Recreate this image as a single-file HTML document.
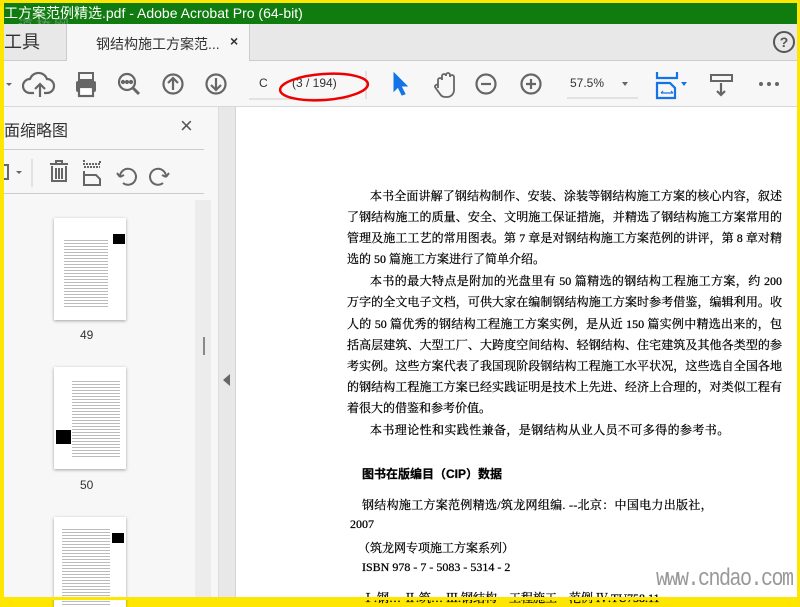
<!DOCTYPE html>
<html><head><meta charset="utf-8"><style>
*{margin:0;padding:0;box-sizing:border-box}
body{width:800px;height:600px;overflow:hidden;background:#ffe600;position:relative;font-family:"Liberation Sans","Noto Sans CJK SC",sans-serif}
.a{position:absolute}
#title{left:4px;top:3px;width:793px;height:21px;background:#107c10;color:#fff;font-size:14px;line-height:20px}
#tabs{left:4px;top:24px;width:793px;height:37px;background:#e8e8e8;border-bottom:1px solid #ccc}
#tool{left:4px;top:61px;width:793px;height:46px;background:#f7f7f7;border-bottom:1px solid #d8d8d8}
#side{left:4px;top:107px;width:214px;height:490px;background:#f7f7f7}
#split{left:218px;top:107px;width:18px;height:490px;background:#e8e8e8;border-left:1px solid #ddd;border-right:1px solid #d4d4d4}
#doc{left:236px;top:107px;width:561px;height:490px;background:#fff}
.t{position:absolute;font-family:"Liberation Serif","Noto Serif CJK SC",serif;font-size:12px;color:#000;white-space:nowrap;-webkit-text-stroke:0.25px #000}
.f{white-space:normal;text-align:justify;text-align-last:justify}
svg{position:absolute}
.thumb{position:absolute;left:50px;width:72px;background:#fff;box-shadow:0 1px 3px rgba(0,0,0,.35)}
</style></head><body>
<div id="title" class="a">工方案范例精选.pdf - Adobe Acrobat Pro (64-bit)</div>
<div class="a" style="left:18px;top:14px;color:#9aa;font-size:15px;letter-spacing:3px;opacity:.6">道桥网</div>
<div id="tabs" class="a">
 <div class="a" style="left:0;top:0;width:62px;height:37px;font-size:18px;line-height:37px;color:#333">工具</div>
 <div class="a" style="left:62px;top:0;width:184px;height:38px;background:#f7f7f7;border-left:1px solid #ccc;border-right:1px solid #ccc"></div>
 <div class="a" style="left:92px;top:10px;font-size:14px;color:#333">钢结构施工方案范...</div>
 <div class="a" style="left:226px;top:9px;font-size:14px;color:#333;font-weight:bold">×</div>
 <svg style="left:768px;top:6px" width="24" height="24"><circle cx="12" cy="12" r="10" fill="none" stroke="#555" stroke-width="2"/><text x="12" y="17" text-anchor="middle" font-size="14" font-weight="bold" fill="#555" font-family="Liberation Sans">?</text></svg>
</div>
<div id="tool" class="a">
 <svg style="left:0;top:0" width="793" height="46" fill="none" stroke="#666" stroke-width="2.2">
  <path d="M2 22l3 3 3-3" fill="#666" stroke="none"/>
  <path d="M30 32h-4a7 7 0 0 1 0-14a9 9 0 0 1 17 0a7 7 0 0 1 0 14h-3M36 36v-12M31 28l5-5 5 5"/>
  <rect x="72" y="20" width="20" height="11" rx="2" fill="#666" stroke="none"/><rect x="75" y="12" width="14" height="7" stroke-width="2"/><rect x="75" y="26" width="14" height="9" fill="#fff" stroke="#666"/>
  <circle cx="123" cy="21" r="8"/><path d="M129 27l6 6" stroke-width="3"/><circle cx="119" cy="21" r="1" fill="#666"/><circle cx="123" cy="21" r="1" fill="#666"/><circle cx="127" cy="21" r="1" fill="#666"/>
  <circle cx="169" cy="23" r="9.5"/><path d="M169 29v-12M164 22l5-5 5 5"/>
  <circle cx="212" cy="23" r="9.5"/><path d="M212 17v12M207 24l5 5 5-5"/>
  <path d="M245 38h100" stroke="#ccc" stroke-width="1"/>
  <path d="M362 10v28" stroke="#ccc" stroke-width="1"/>
  <path d="M390 12v18l4-4 4 8 3-1-4-8h6z" fill="#1473e6" stroke="#1473e6" stroke-width="1"/>
  <path d="M434 27v-8a2 2 0 0 1 4 0v-4a2 2 0 0 1 4 0v-1a2 2 0 0 1 4 0v2a2 2 0 0 1 4 0v13a7 7 0 0 1-7 7h-2a6 6 0 0 1-5-3l-5-7a2 2 0 0 1 3-2z" stroke-width="1.8"/>
  <circle cx="482" cy="23" r="9.5"/><path d="M477 23h10"/>
  <circle cx="527" cy="23" r="9.5"/><path d="M522 23h10M527 18v10"/>
  <path d="M563 37h71" stroke="#ccc" stroke-width="1"/>
  <path d="M618 21h6l-3 4z" fill="#666" stroke="none"/>
  <path d="M653 11v6h20v-6M653 32v-10h13l5 5v10h-18z" stroke="#1473e6"/><path d="M657 32h12M657 32l2-2M669 32l-2-2" stroke="#1473e6" stroke-width="1.2"/><path d="M677 21h6l-3 4z" fill="#1473e6" stroke="none"/>
  <rect x="707" y="14" width="21" height="6" stroke-width="2"/><path d="M717 22v12M713 30l4 4 4-4"/>
  <circle cx="757" cy="23" r="2" fill="#666" stroke="none"/><circle cx="765" cy="23" r="2" fill="#666" stroke="none"/><circle cx="773" cy="23" r="2" fill="#666" stroke="none"/>
 </svg>
 <div class="a" style="left:255px;top:15px;font-size:12px;color:#333">C</div>
 <div class="a" style="left:288px;top:15px;font-size:12px;color:#333">(3 / 194)</div>
 <div class="a" style="left:566px;top:15px;font-size:12px;color:#333">57.5%</div>
 <svg style="left:270px;top:6px" width="100" height="40"><ellipse cx="50" cy="20" rx="44" ry="13" fill="none" stroke="#e00" stroke-width="2.5" transform="rotate(-4 50 20)"/></svg>
</div>
<div id="side" class="a">
 <div class="a" style="left:0;top:10px;font-size:16px;color:#333">面缩略图</div>
 <div class="a" style="left:176px;top:6px;font-size:22px;color:#555">×</div>
 <div class="a" style="left:0;top:42px;width:200px;height:1px;background:#ccc"></div>
 <div class="a" style="left:0;top:86px;width:200px;height:1px;background:#ccc"></div>
 <svg style="left:0;top:48px" width="200" height="36" fill="none" stroke="#666" stroke-width="2">
  <path d="M0 10h4v14h-4"/><path d="M12 16h6l-3 3z" fill="#666" stroke="none"/><path d="M28 4v28" stroke="#ccc" stroke-width="1"/>
  <path d="M46 9h18M52 9v-3h6v3M48 11v15h14v-15M52 13v11M55 13v11M58 13v11"/>
  <path d="M80 5v4h16v-4M80 12h16" stroke-dasharray="2 1"/><path d="M80 16v14h16v-6l-4-4h-12"/>
  <path d="M116 22a8 8 0 1 1 3 6M116 22l-3-4M116 22l4-2"/>
  <path d="M162 22a8 8 0 1 0-3 6M162 22l3-4M162 22l-4-2"/>
 </svg>
 <div class="a" style="left:191px;top:93px;width:16px;height:397px;background:#ececec"></div>
 <div class="a" style="left:199px;top:230px;width:2px;height:18px;background:#888"></div>
 <div class="thumb" style="top:111px;height:102px"><div class="a" style="left:59px;top:16px;width:12px;height:10px;background:#000"></div><div class="a" style="left:10px;top:20px;width:44px;height:70px;background:repeating-linear-gradient(#fff 0 2px,#bbb 2px 3px)"></div></div>
 <div class="a" style="left:76px;top:221px;font-size:12px;color:#333">49</div>
 <div class="thumb" style="top:260px;height:102px"><div class="a" style="left:2px;top:63px;width:15px;height:14px;background:#000"></div><div class="a" style="left:18px;top:12px;width:48px;height:80px;background:repeating-linear-gradient(#fff 0 2px,#bbb 2px 3px)"></div></div>
 <div class="a" style="left:76px;top:371px;font-size:12px;color:#333">50</div>
 <div class="thumb" style="top:410px;height:90px"><div class="a" style="left:58px;top:16px;width:12px;height:10px;background:#000"></div><div class="a" style="left:8px;top:10px;width:48px;height:80px;background:repeating-linear-gradient(#fff 0 2px,#bbb 2px 3px)"></div></div>
</div>
<div id="split" class="a"><div class="a" style="left:4px;top:267px;width:0;height:0;border-top:6px solid transparent;border-bottom:6px solid transparent;border-right:7px solid #666"></div></div>
<div id="doc" class="a"></div>
<div class="t f" style="left:370px;top:187px;width:412px">本书全面讲解了钢结构制作、安装、涂装等钢结构施工方案的核心内容，叙述</div>
<div class="t f" style="left:347px;top:208px;width:435px">了钢结构施工的质量、安全、文明施工保证措施，并精选了钢结构施工方案常用的</div>
<div class="t f" style="left:347px;top:229px;width:435px">管理及施工工艺的常用图表。第 7 章是对钢结构施工方案范例的讲评，第 8 章对精</div>
<div class="t" style="left:347px;top:250px">选的 50 篇施工方案进行了简单介绍。</div>
<div class="t f" style="left:370px;top:272px;width:412px">本书的最大特点是附加的光盘里有 50 篇精选的钢结构工程施工方案，约 200</div>
<div class="t f" style="left:347px;top:293px;width:435px">万字的全文电子文档，可供大家在编制钢结构施工方案时参考借鉴，编辑利用。收</div>
<div class="t f" style="left:347px;top:315px;width:435px">人的 50 篇优秀的钢结构工程施工方案实例，是从近 150 篇实例中精选出来的，包</div>
<div class="t f" style="left:347px;top:336px;width:435px">括高层建筑、大型工厂、大跨度空间结构、轻钢结构、住宅建筑及其他各类型的参</div>
<div class="t f" style="left:347px;top:357px;width:435px">考实例。这些方案代表了我国现阶段钢结构工程施工水平状况，这些选自全国各地</div>
<div class="t f" style="left:347px;top:378px;width:435px">的钢结构工程施工方案已经实践证明是技术上先进、经济上合理的，对类似工程有</div>
<div class="t" style="left:347px;top:399px">着很大的借鉴和参考价值。</div>
<div class="t" style="left:370px;top:421px;letter-spacing:0.4px">本书理论性和实践性兼备，是钢结构从业人员不可多得的参考书。</div>
<div class="t" style="left:362px;top:465px;font-weight:bold;font-family:'Liberation Sans','Noto Sans CJK SC',sans-serif;font-size:12px">图书在版编目（CIP）数据</div>
<div class="t" style="left:362px;top:496px;letter-spacing:0.3px">钢结构施工方案范例精选/筑龙网组编. --北京：中国电力出版社，</div>
<div class="t" style="left:350px;top:517px">2007</div>
<div class="t" style="left:358px;top:539px">（筑龙网专项施工方案系列）</div>
<div class="t" style="left:362px;top:560px">ISBN 978 - 7 - 5083 - 5314 - 2</div>
<div class="t" style="left:362px;top:589px">Ⅰ.钢… Ⅱ.筑… Ⅲ.钢结构—工程施工—范例 Ⅳ.TU758.11</div>
<div class="a" style="left:656px;top:568px;font-family:'Liberation Mono',monospace;font-size:20px;color:#999;letter-spacing:-1.5px;transform:scaleY(1.2)">www.cndao.com</div>
<div class="a" style="left:0;top:597px;width:800px;height:3px;background:#ffe600"></div>
</body></html>
